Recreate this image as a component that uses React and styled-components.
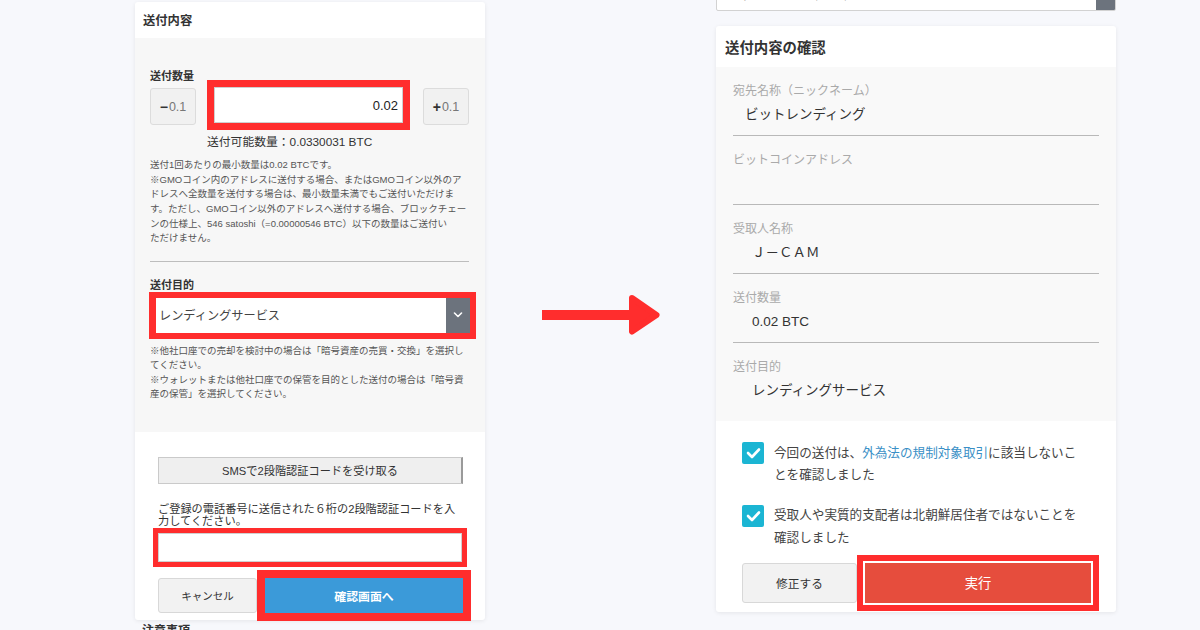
import React from "react";
import styled, { createGlobalStyle } from "styled-components";

const RED = "#ff2d2d";

const Global = createGlobalStyle`
  html, body { margin: 0; padding: 0; }
  body {
    background: #f7f8fc;
    font-family: "Liberation Sans", "Noto Sans CJK JP", sans-serif;
    color: #333;
    overflow: hidden;
  }
  * { box-sizing: border-box; }
`;

const Page = styled.div`
  display: flex;
  align-items: flex-start;
  height: 630px;
  padding-left: 135px;
  overflow: hidden;
`;

const Column = styled.div`
  width: ${(p) => p.$w}px;
  flex: none;
  display: flex;
  flex-direction: column;
`;

const ArrowColumn = styled.div`
  width: 231px;
  height: 630px;
  flex: none;
  display: flex;
  align-items: center;
  justify-content: center;
`;

const Panel = styled.div`
  background: #fff;
  border-radius: 3px;
  box-shadow: 0 1px 4px rgba(0, 0, 0, 0.08);
  margin-top: ${(p) => p.$top}px;
`;

const PanelHeader = styled.div`
  height: ${(p) => p.$h}px;
  display: flex;
  align-items: center;
  padding-left: ${(p) => p.$pad}px;
  font-size: ${(p) => p.$size}px;
  font-weight: bold;
  color: #333;
`;

const GrayBody = styled.div`
  background: #f7f7f7;
  padding: 31px 15px 30px 15px;
`;

const FieldLabel = styled.div`
  font-size: 11px;
  font-weight: bold;
  line-height: 14px;
  color: #333;
  margin-top: ${(p) => p.$mt || 0}px;
`;

const AmountRow = styled.div`
  display: flex;
  align-items: flex-start;
  margin-top: 4px;
`;

const StepButton = styled.div`
  width: 46px;
  height: 37px;
  margin-top: 1px;
  margin-left: ${(p) => p.$ml || 0}px;
  background: #f1f1f1;
  border: 1px solid #dcdcdc;
  border-radius: 3px;
  display: flex;
  align-items: center;
  justify-content: center;
  font-size: 12.5px;
  color: #777;
  b { color: #333; font-size: 14px; margin-right: 1px; }
`;

const AmountInput = styled.div`
  width: 189px;
  height: 36px;
  margin-left: 18px;
  background: #fff;
  border: 1px solid #cfcfcf;
  box-shadow: 0 0 0 7px ${RED};
  display: flex;
  align-items: center;
  justify-content: flex-end;
  padding-right: 4px;
  font-size: 13px;
  color: #222;
`;

const Available = styled.div`
  margin-top: 10px;
  padding-left: 57px;
  font-size: 11.8px;
  line-height: 14px;
  color: #333;
`;

const Note = styled.div`
  margin-top: ${(p) => p.$mt}px;
  font-size: 9.5px;
  line-height: ${(p) => p.$lh}px;
  color: #555;
  white-space: nowrap;
`;

const Divider = styled.div`
  height: 1px;
  background: #bdbdbd;
  margin-top: 15px;
  width: 319px;
`;

const SelectBox = styled.div`
  margin-top: 6px;
  margin-left: 6px;
  width: 314px;
  height: 35px;
  background: #fff;
  box-shadow: 0 0 0 6px ${RED}, -1px 0 0 6px ${RED};
  display: flex;
  align-items: stretch;
`;

const SelectText = styled.div`
  flex: 1;
  display: flex;
  align-items: center;
  padding-left: 3px;
  font-size: 12.2px;
  color: #444;
`;

const SelectArrow = styled.div`
  width: ${(p) => p.$w}px;
  background: #6c737d;
  display: flex;
  align-items: center;
  justify-content: center;
`;

const WhiteSection = styled.div`
  padding: ${(p) => p.$pad};
`;

const SmsButton = styled.div`
  width: 305px;
  height: 27px;
  background: #efefef;
  border: 1px solid #cacaca;
  border-right: 2px solid #9a9a9a;
  display: flex;
  align-items: center;
  justify-content: center;
  font-size: 11.2px;
  color: #333;
`;

const Paragraph = styled.div`
  margin-top: 19.5px;
  font-size: 11.2px;
  line-height: 12px;
  color: #333;
  white-space: nowrap;
`;

const CodeInput = styled.div`
  margin-top: 5.5px;
  width: 304px;
  height: 29px;
  background: #fff;
  border: 1px solid #d0d0d0;
  box-shadow: 0 0 0 5px ${RED};
`;

const ButtonRow = styled.div`
  display: flex;
  align-items: center;
  margin-top: ${(p) => p.$mt}px;
`;

const GrayButton = styled.div`
  width: ${(p) => p.$w}px;
  height: ${(p) => p.$h}px;
  background: #f2f2f2;
  border: 1px solid #d8d8d8;
  border-radius: 3px;
  display: flex;
  align-items: center;
  justify-content: center;
  font-size: ${(p) => p.$size}px;
  color: #333;
`;

const PrimaryButton = styled.div`
  width: ${(p) => p.$w}px;
  height: ${(p) => p.$h}px;
  margin-left: 8px;
  background: ${(p) => p.$bg};
  box-shadow: ${(p) => p.$shadow};
  display: flex;
  align-items: center;
  justify-content: center;
  font-size: ${(p) => p.$size}px;
  font-weight: ${(p) => (p.$bold ? "bold" : "normal")};
  color: #fff;
`;

const BelowText = styled.div`
  margin-top: 4px;
  padding-left: 7px;
  font-size: 12px;
  font-weight: bold;
  line-height: 14px;
  color: #333;
`;

const TopSelect = styled.div`
  margin-top: -25px;
  height: 36px;
  background: #fff;
  border: 1px solid #d2d2d2;
  border-radius: 2px;
  display: flex;
  align-items: stretch;
  overflow: hidden;
`;

const TopSelectText = styled.div`
  flex: 1;
  display: flex;
  align-items: center;
  padding-left: 10px;
  font-size: 13px;
  color: #444;
`;

const ConfirmBody = styled.div`
  background: #f9f9f9;
  padding: 0 17px;
`;

const Field = styled.div`
  padding: 16px 0 ${(p) => (p.$last ? 20 : 10)}px;
  border-bottom: ${(p) => (p.$last ? "none" : "1px solid #b9b9b9")};
`;

const FieldName = styled.div`
  font-size: 12px;
  line-height: 16px;
  color: #aaa;
`;

const FieldValue = styled.div`
  margin-top: 6px;
  height: 20px;
  line-height: 20px;
  padding-left: ${(p) => p.$indent}px;
  font-size: 13.5px;
  color: #333;
`;

const CheckItem = styled.div`
  display: flex;
  align-items: flex-start;
  margin-top: ${(p) => p.$mt || 0}px;
`;

const CheckBox = styled.div`
  width: 22px;
  height: 22px;
  flex: none;
  border-radius: 2px;
  background: #1bb5d3;
  display: flex;
  align-items: center;
  justify-content: center;
`;

const CheckText = styled.div`
  margin-left: 10px;
  font-size: 12.6px;
  line-height: 22.5px;
  color: #444;
  white-space: nowrap;
  margin-top: -0.5px;
`;

const Link = styled.span`
  color: #3a8fc6;
`;

const Chevron = ({ size = 10 }) => (
  <svg width={size} height={size * 0.6} viewBox="0 0 10 6">
    <polyline points="1.5,1 5,4.5 8.5,1" fill="none" stroke="#fff" strokeWidth="1.6" strokeLinecap="round" strokeLinejoin="round" />
  </svg>
);

const Check = () => (
  <svg width="15" height="12" viewBox="0 0 15 12">
    <polyline points="2,6 6,10 13,2.5" fill="none" stroke="#fff" strokeWidth="2.6" strokeLinecap="round" strokeLinejoin="round" />
  </svg>
);

const Arrow = () => (
  <svg width="118" height="40" viewBox="0 0 118 40">
    <rect x="0" y="15" width="92" height="10" fill={RED} />
    <polygon points="90,3 114.5,20 90,36.5" fill={RED} stroke={RED} strokeWidth="6" strokeLinejoin="round" />
  </svg>
);

export default function App() {
  return (
    <>
      <Global />
      <Page>
        <Column $w={350}>
          <Panel $top={2}>
            <PanelHeader $h={36} $pad={8} $size={12.3}>送付内容</PanelHeader>
            <GrayBody>
              <FieldLabel>送付数量</FieldLabel>
              <AmountRow>
                <StepButton><b>−</b>0.1</StepButton>
                <AmountInput>0.02</AmountInput>
                <StepButton $ml={20}><b>+</b>0.1</StepButton>
              </AmountRow>
              <Available>送付可能数量：0.0330031 BTC</Available>
              <Note $mt={9.3} $lh={14.6}>
                送付1回あたりの最小数量は0.02 BTCです。<br />
                ※GMOコイン内のアドレスに送付する場合、またはGMOコイン以外のア<br />
                ドレスへ全数量を送付する場合は、最小数量未満でもご送付いただけま<br />
                す。ただし、GMOコイン以外のアドレスへ送付する場合、ブロックチェー<br />
                ンの仕様上、546 satoshi（=0.00000546 BTC）以下の数量はご送付い<br />
                ただけません。
              </Note>
              <Divider />
              <FieldLabel $mt={16}>送付目的</FieldLabel>
              <SelectBox>
                <SelectText>レンディングサービス</SelectText>
                <SelectArrow $w={24}><Chevron /></SelectArrow>
              </SelectBox>
              <Note $mt={10.7} $lh={14.5}>
                ※他社口座での売却を検討中の場合は「暗号資産の売買・交換」を選択し<br />
                てください。<br />
                ※ウォレットまたは他社口座での保管を目的とした送付の場合は「暗号資<br />
                産の保管」を選択してください。
              </Note>
            </GrayBody>
            <WhiteSection $pad="25px 22px 7.5px 23px">
              <SmsButton>SMSで2段階認証コードを受け取る</SmsButton>
              <Paragraph>
                ご登録の電話番号に送信された６桁の2段階認証コードを入<br />
                力してください。
              </Paragraph>
              <CodeInput />
              <ButtonRow $mt={16}>
                <GrayButton $w={99} $h={35} $size={10.5}>キャンセル</GrayButton>
                <PrimaryButton
                  $w={198}
                  $h={35}
                  $bg="#3b9ad9"
                  $size={11.9}
                  $bold
                  $shadow={`0 0 0 8px ${RED}`}
                >
                  確認画面へ
                </PrimaryButton>
              </ButtonRow>
            </WhiteSection>
          </Panel>
          <BelowText>注意事項</BelowText>
        </Column>

        <ArrowColumn>
          <Arrow />
        </ArrowColumn>

        <Column $w={400}>
          <TopSelect>
            <TopSelectText>ビットコイン（BTC）</TopSelectText>
            <SelectArrow $w={19}><Chevron size={8} /></SelectArrow>
          </TopSelect>
          <Panel $top={15}>
            <PanelHeader $h={41} $pad={9} $size={14.4}>送付内容の確認</PanelHeader>
            <ConfirmBody>
              <Field>
                <FieldName>宛先名称（ニックネーム）</FieldName>
                <FieldValue $indent={12}>ビットレンディング</FieldValue>
              </Field>
              <Field>
                <FieldName>ビットコインアドレス</FieldName>
                <FieldValue $indent={12}></FieldValue>
              </Field>
              <Field>
                <FieldName>受取人名称</FieldName>
                <FieldValue $indent={19}>Ｊ－ＣＡＭ</FieldValue>
              </Field>
              <Field>
                <FieldName>送付数量</FieldName>
                <FieldValue $indent={19}>0.02 BTC</FieldValue>
              </Field>
              <Field $last>
                <FieldName>送付目的</FieldName>
                <FieldValue $indent={19}>レンディングサービス</FieldValue>
              </Field>
            </ConfirmBody>
            <WhiteSection $pad="21px 17px 8.6px 26px">
              <CheckItem>
                <CheckBox><Check /></CheckBox>
                <CheckText>
                  今回の送付は、<Link>外為法の規制対象取引</Link>に該当しないこ<br />
                  とを確認しました
                </CheckText>
              </CheckItem>
              <CheckItem $mt={18.4}>
                <CheckBox><Check /></CheckBox>
                <CheckText>
                  受取人や実質的支配者は北朝鮮居住者ではないことを<br />
                  確認しました
                </CheckText>
              </CheckItem>
              <ButtonRow $mt={13.6}>
                <GrayButton $w={115} $h={40} $size={11.7}>修正する</GrayButton>
                <PrimaryButton
                  $w={226}
                  $h={40}
                  $bg="#e64d3d"
                  $size={13.3}
                  $shadow={`0 0 0 2px #fff, 0 0 0 8px ${RED}`}
                >
                  実行
                </PrimaryButton>
              </ButtonRow>
            </WhiteSection>
          </Panel>
        </Column>
      </Page>
    </>
  );
}
